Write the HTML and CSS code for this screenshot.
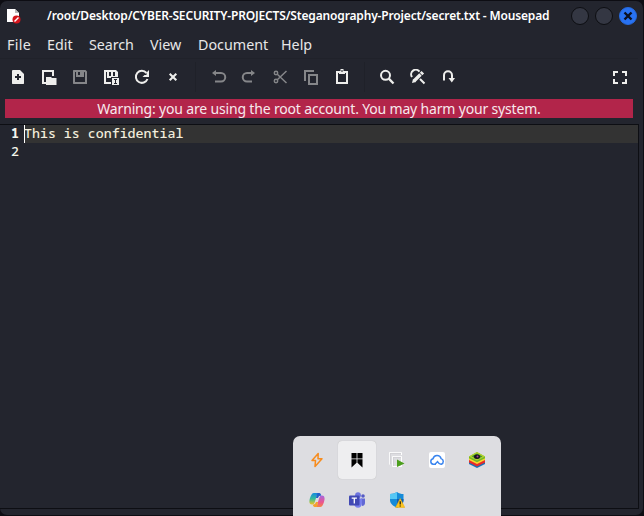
FILE: index.html
```html
<!DOCTYPE html>
<html lang="en">
<head>
<meta charset="utf-8">
<title>Mousepad</title>
<link rel="stylesheet" href="styles.css">
</head>
<body>
<main class="window">
  <header class="titlebar">
    <svg class="app" width="16" height="16" viewBox="0 0 16 16"><path d="M1 1h8l4 4v9H1z" fill="#fff"/><path d="M9 1v4h4z" fill="#bbb"/><circle cx="10.5" cy="11.5" r="4" fill="#d4151c"/><path d="M8.500 13.500l4-4" stroke="#fff" stroke-width="1.500"/></svg>
    <h1 class="title"><span>/root/Desktop/CYBER-SECURITY-PROJECTS/Steganography-Project/secret.txt - Mousepad</span></h1>
    <div class="controls">
      <i class="dot"></i><i class="dot"></i>
      <i class="dot close"><svg width="18" height="18" viewBox="0 0 18 18"><path d="M5.500 5.500l7 7m0-7l-7 7" stroke="#0b1020" stroke-width="2.400"/></svg></i>
    </div>
  </header>
  <nav class="menu"><span class="m1">File</span><span class="m2">Edit</span><span class="m3">Search</span><span class="m4">View</span><span class="m5">Document</span><span class="m6">Help</span></nav>
  <div class="toolbar">
    <div class="group">
      <svg viewBox="0 0 16 16"><path fill="currentColor" fill-rule="evenodd" d="M3 1h7l4 4v9.500l-.5.5H2.500L2 14.500V1.500zM7 5v2H5v2h2v2h2V9h2V7H9V5z"/></svg>
      <svg viewBox="0 0 16 16"><path fill="none" stroke="currentColor" stroke-width="2" d="M5 14H2V2h10v5"/><path fill="currentColor" d="M5 8h5l1 1h4.500v7H5z"/></svg>
      <svg class="off" viewBox="0 0 16 16"><path fill="currentColor" fill-rule="evenodd" d="M1.500 1h12l1.500 1.500V15H1.500L1 14.500v-13zM3 3v10h10V3.500L12.500 3H12v5H4V3zM6 3v3h2V3z"/></svg>
      <svg viewBox="0 0 16 16"><path fill="currentColor" fill-rule="evenodd" d="M1 1h12l2 2v5H8v5H3v2H1zM3 3v10h5V9H4V3zm3 0v4h2V3zm4 0v4h2V3z"/><path fill="currentColor" d="M3 13h5v2H3zM9 9h7v7H9z"/><path stroke="#23252e" fill="none" d="M11 10.500h3M12.500 10v5M11 14.500h3"/></svg>
      <svg viewBox="0 0 16 16"><path fill="none" stroke="currentColor" stroke-width="2" d="M12.500 4A6 6 0 1 0 13.500 10"/><path fill="currentColor" d="M15 1v7H8.500l2-2h2V3.500z"/></svg>
      <svg viewBox="0 0 16 16"><path fill="none" stroke="currentColor" stroke-width="2.100" d="M4.700 4.700l6.600 6.600m0-6.600l-6.600 6.600"/></svg>
    </div>
    <i class="rule"></i>
    <div class="group history off">
      <svg viewBox="0 0 16 16"><path fill="none" stroke="currentColor" stroke-width="2" d="M4 4h6a4 4 0 0 1 0 8.500H4"/><path fill="currentColor" d="M1 4l4-3v6z"/></svg>
      <svg viewBox="0 0 16 16"><path fill="none" stroke="currentColor" stroke-width="2" d="M11 4H6a4 4 0 0 0 0 8.500h5"/><path fill="currentColor" d="M14 4l-4-3v6z"/></svg>
      <svg viewBox="0 0 16 16"><g fill="none" stroke="currentColor" stroke-width="1.500"><circle cx="4" cy="4" r="1.700"/><circle cx="4" cy="12" r="1.700"/><path d="M5.300 5.200l9.200 8.800M5.300 10.800L14.500 2"/></g></svg>
      <svg viewBox="0 0 16 16"><path fill="none" stroke="currentColor" stroke-width="2" d="M2 12V2h9"/><path fill="none" stroke="currentColor" stroke-width="2" d="M6 6h8v9H6z"/></svg>
      <svg class="on" viewBox="0 0 16 16"><path fill="none" stroke="currentColor" stroke-width="2" d="M3 3h10v11H3z"/><path fill="currentColor" d="M5 2h1.500V0h3v2H11v3H5z"/><path fill="#23252e" d="M7.300 1.300h1.400v1.400H7.300z"/></svg>
    </div>
    <i class="rule"></i>
    <div class="group find">
      <svg viewBox="0 0 16 16"><circle cx="6.500" cy="6.300" r="4.500" fill="none" stroke="currentColor" stroke-width="2"/><path stroke="currentColor" stroke-width="2.300" d="M9.800 9.600l4.700 4.900"/></svg>
      <svg viewBox="0 0 16 16"><path fill="none" stroke="currentColor" stroke-width="2" d="M2 8a4.500 4.500 0 0 1 7.500-5.300M10 10l4.500 4.500"/><path stroke="currentColor" stroke-width="3.400" d="M4 12l6.500-6.500"/><path fill="currentColor" d="M2 14l1-4 3 3zM9.800 3.800L11.600 2l2.500 2.500-1.800 1.800z"/></svg>
      <svg viewBox="0 0 16 16"><path fill="none" stroke="currentColor" stroke-width="2" d="M3 11.500V6.200a4 4 0 0 1 8 0V10"/><path fill="currentColor" d="M7.500 9H14l-3.200 4.500z"/></svg>
    </div>
    <svg class="full" viewBox="0 0 16 16"><path fill="none" stroke="currentColor" stroke-width="2" d="M2 7V3h4M10 3h4v4M14 10v4h-4M6 14H2v-4"/></svg>
  </div>
  <div class="warning"><span>Warning: you are using the root account. You may harm your system.</span></div>
  <section class="editor">
    <div class="line current"><b class="no">1</b><span class="code"><span>This is confidential</span></span></div>
    <div class="line"><span class="no">2</span></div>
  </section>
</main>
<aside class="tray">
  <div class="cell"><svg viewBox="0 0 16 16"><path fill="none" stroke="#f78c1e" stroke-width="1.500" stroke-linejoin="round" d="M9.200 1.500L3 8.500h3.500L6 14.500l7-7.700H9z"/></svg></div>
  <div class="cell active"><svg viewBox="0 0 16 16"><path d="M2.500 1H7.600v5.500H2.500zM8.400 1h5.100v5.500H8.400zM2.500 7.300h5.100v3.500l-5.100 4.700zM8.400 7.300h5.100v8.200l-5.100-4.700z"/></svg></div>
  <div class="cell"><svg viewBox="0 0 16 16"><path fill="none" stroke="#fff" d="M.5 12.500V.5h12V3M3.500 4.500h9v10h-9z"/><path fill="none" stroke="#b8b8bc" stroke-width=".4" d="M1.300 12V1.300H12M4.300 14V5.300H12"/><path fill="#4b9e1c" d="M8 7.500l7.500 4L8 15z"/></svg></div>
  <div class="cell"><svg viewBox="0 0 16 16"><rect width="16" height="16" rx="2" fill="#fff"/><path fill="none" stroke="#3984ef" stroke-width="1.500" d="M7 12.300H4.200a2.800 2.800 0 0 1-.2-5.500 4.200 4.200 0 0 1 8.100-.2 3 3 0 0 1 .2 5.700c-1.800.2-2.800-1-3.800-2.600L6.200 12"/></svg></div>
  <div class="cell"><svg viewBox="0 0 16 16"><path fill="#1772b9" d="M0 9v3l8 4 8-4V9z"/><path fill="#e72b2b" d="M0 7v3.500l8 4 8-4V7z"/><path fill="#fbd72b" d="M0 5.500V8l8 4 8-4V5.500z"/><path fill="#71b72b" d="M8 0l8 4.500v1.800l-8 4-8-4V4.500z"/><path fill="#b4d52c" d="M8 0l8 4.500-8 4-8-4z"/><path fill="#428f30" d="M8 1.500l5.500 3L8 7.300l-5.500-3z"/><ellipse cx="8" cy="4.800" rx="3" ry="2.200" fill="#18151f"/><circle cx="8.500" cy="4.500" r="1" fill="#a04596"/></svg></div>
  <div class="cell"><svg viewBox="0 0 16 16"><defs><linearGradient id="ca" x2="0" y2="1"><stop stop-color="#1489e0"/><stop offset=".5" stop-color="#35bd9b"/><stop offset="1" stop-color="#f3c51c"/></linearGradient><linearGradient id="cb" x2="0" y2="1"><stop stop-color="#a567e0"/><stop offset=".6" stop-color="#ec568d"/><stop offset="1" stop-color="#f58442"/></linearGradient></defs><path fill="url(#ca)" d="M5 1h4.500c-1.300.8-1.700 2-2.200 4l-1.500 5c-.5 1.700-1.300 2.500-2.800 2.500C0 12.500 0 9 1 6c1-3 2-5 4-5z"/><path fill="url(#cb)" d="M11 15H6.500c1.300-.8 1.700-2 2.200-4l1.500-5c.5-1.700 1.300-2.500 2.800-2.500 3 0 3 3.500 2 6.500-1 3-2 5-4 5z"/><path fill="#2460cb" d="M7.500 1h2.800c1.200 0 1.500 1 2 2.400C10.500 3.500 9.800 4 9 6H7c.5-2 .3-4 1.500-5z"/><path fill="#f4a12c" d="M8.500 15H5.700c-1.200 0-1.500-1-2-2.400C5.500 12.500 6.200 12 7 10h2c-.5 2-.3 4-1.500 5z"/></svg></div>
  <div class="cell"><svg viewBox="0 0 16 16"><circle cx="9" cy="3.200" r="2.900" fill="#6e75df"/><circle cx="14" cy="4" r="1.800" fill="#555bc5"/><path fill="#6269d5" d="M12 6.500h4v4.500c0 2-1.500 3-3 3z"/><path fill="#777eed" d="M5 6.500h8V11c0 3-1.800 4.800-4 4.800S5 14 5 11z"/><rect y="3.500" width="10.500" height="10" rx="1" fill="#4149b4"/><path stroke="#fff" stroke-width="1.300" d="M2.700 6.200h5.200M5.300 6.200v5.200"/></svg></div>
  <div class="cell"><svg viewBox="0 0 16 16"><path fill="#168bd8" d="M8 0c2 1.500 4 2 6.500 2v6c0 3.500-2.500 6-6.500 7.500C4 14 1 11.500 1 8V2c3 0 5-.7 7-2z"/><path fill="#55c7f4" d="M8 0v7H1V2c3 0 5-.7 7-2z"/><path fill="#0f60b4" d="M8 7h6.500v1c0 3.500-2.500 6-6.500 7.500z"/><path fill="#ffc51b" stroke="#e8a912" stroke-width=".5" stroke-linejoin="round" d="M11.200 6.500l4.600 9H6.500z"/><path stroke="#17140a" stroke-width="1.200" d="M11.200 9.300v3.300m0 .8v1.200"/></svg></div>
</aside>
</body>
</html>
```
FILE: styles.css
```css
* { box-sizing: border-box; }
body { margin: 0; width: 644px; height: 516px; overflow: hidden; background: #0d0d13; font-family: "Noto Sans", sans-serif; }
.window { width: 643px; height: 514px; margin-top: 1px; padding: 0 5px 6px 0; background: #23252e; border-radius: 7px; display: flex; flex-direction: column; }
.titlebar { height: 30px; flex: none; display: flex; align-items: center; padding-left: 6px; color: #fff; }
.app { margin-right: 25px; flex: none; }
.title { margin: 0; width: 524px; flex: none; font-size: 12px; font-weight: 600; line-height: 30px; letter-spacing: -.16px; white-space: nowrap; }
.controls { display: flex; gap: 6px; }
.dot { display: block; flex: none; width: 18px; height: 18px; border: 1px solid #0d0e12; border-radius: 50%; background: #343743; }
.close { background: #2872f2; border-color: #2669dc; }
.close svg { display: block; margin: -1px; }
.menu { height: 27px; flex: none; display: flex; padding-left: 7px; font-size: 14.3px; line-height: 27px; color: #e7e7e8; white-space: nowrap; }
.m1 { width: 40px; letter-spacing: .3px; }
.m2 { width: 42px; }
.m3 { width: 61px; letter-spacing: -.1px; }
.m4 { width: 48px; }
.m5 { width: 83px; }
.toolbar { height: 40px; flex: none; display: flex; align-items: center; padding: 0 10px 3px; border-top: 1px solid #20222a; color: #eeeeec; }
.toolbar svg { width: 16px; height: 16px; flex: none; display: block; }
.group { display: flex; gap: 15px; }
.off { color: #858689; }
.on { color: #eeeeec; }
.rule { width: 1px; height: 30px; margin: 0 14.5px 0 14px; background: #1f2129; }
.toolbar .full { margin-left: auto; }
.history { gap: 14.75px; }
.warning { width: 628px; height: 19px; margin: 1px 0 6px 5px; flex: none; background: #b2254a; color: #f7e9ed; text-align: center; font-size: 14px; line-height: 19px; letter-spacing: -.17px; white-space: nowrap; }
.editor { width: 639px; flex: 1; border: solid #0d0e13; border-width: 1px 1px 1px 0; font: 500 13.29px/16px "Noto Sans Mono", "DejaVu Sans Mono", monospace; color: #f5f5ec; }
.line { display: flex; height: 18px; }
.no { width: 24px; padding-left: 11px; flex: none; }
.code { flex: 1; background: #333; box-shadow: inset 1px 0 #fff; color: #f2eddc; }
.tray { position: absolute; left: 293px; top: 436px; width: 208px; height: 90px; padding: 4px; display: grid; grid-template-columns: repeat(5, 40px); grid-auto-rows: 40px; background: #dddde1; border-radius: 7px; }
.cell { display: grid; place-items: center; }
.cell svg { width: 16px; height: 16px; display: block; }
.active { width: 38px; height: 38px; margin: 1px; border-radius: 4px; background: #eeeef0; box-shadow: 0 0 1px #aaa; }
```
